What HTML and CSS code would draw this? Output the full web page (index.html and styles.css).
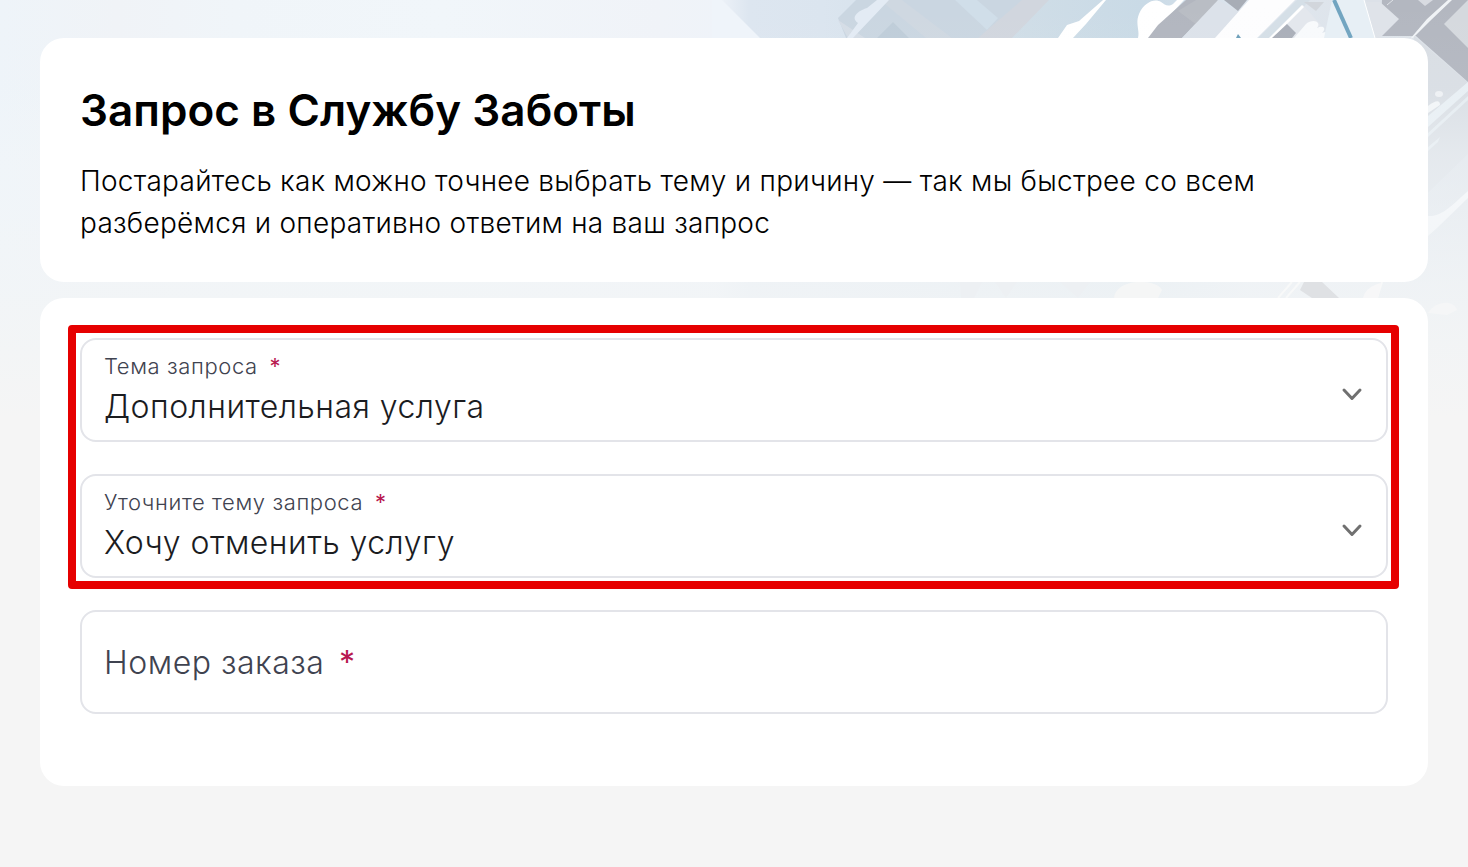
FILE: index.html
```
<!DOCTYPE html>
<html lang="ru">
<head>
    <meta charset="UTF-8">
    <meta name="viewport" content="width=device-width, initial-scale=1.0">
    <title>Запрос в Службу Заботы</title>
    <link rel="stylesheet" href="styles.css">
</head>
<body>
    <!-- Decorative background -->
    <svg class="backdrop" width="1468" height="440" viewBox="0 0 1468 440" aria-hidden="true">
        <defs>
            <linearGradient id="sky" x1="0" y1="0" x2="1" y2="0">
                <stop offset="0" stop-color="#eef4f9"/>
                <stop offset="0.08" stop-color="#f0f3f7"/>
                <stop offset="0.16" stop-color="#f0f5f9"/>
                <stop offset="0.3" stop-color="#f1f6fa"/>
                <stop offset="0.45" stop-color="#f0f3f8"/>
                <stop offset="0.488" stop-color="#eff3f9"/>
                <stop offset="0.51" stop-color="#dde6f0"/>
                <stop offset="0.56" stop-color="#dbe5ef"/>
                <stop offset="0.7" stop-color="#cfdde7"/>
                <stop offset="0.78" stop-color="#c9dae6"/>
                <stop offset="0.85" stop-color="#dfe6ee"/>
                <stop offset="1" stop-color="#dde2e8"/>
            </linearGradient>
            <linearGradient id="fade" x1="0" y1="0" x2="0" y2="1">
                <stop offset="0" stop-color="#f5f5f5" stop-opacity="0"/>
                <stop offset="0.2" stop-color="#f2f6f9" stop-opacity="0.05"/>
                <stop offset="0.35" stop-color="#f2f6f9" stop-opacity="0.45"/>
                <stop offset="0.64" stop-color="#f2f5f7" stop-opacity="0.85"/>
                <stop offset="0.78" stop-color="#f3f5f6" stop-opacity="0.95"/>
                <stop offset="0.95" stop-color="#f5f5f5"/>
            </linearGradient>
        </defs>
        <rect width="1468" height="440" fill="url(#sky)"/>
        <path d="M712 0h10l38 38h-48z" fill="#eff4fa"/>
        <path d="M856 0h192l-56 38H846l-8-20z" fill="#cad6e1"/>
        <path d="M838 20l27 18h-17z" fill="#d5dde6"/>
        <path d="M893 22l16 16h-32z" fill="#bfcdd9"/>
        <path d="M880 0h22l50 38h-26z" fill="#cfd8e1"/>
        <path d="M955 0h22l21 18-11 12z" fill="#d0dee9"/>
        <path d="M1022 0h27l-37 38h-34z" fill="#d1d6de"/>
        <path d="M877 0h12l-36 38h-6l11-15c-8-6 0-12 9-15z" fill="#e3ebf4"/>
        <path d="M1103 0h3l-20 24-13 14h-15l9-13 12-4z" fill="#fff"/>
        <path d="M1184 0l-35 38h-11c2-8-3-14 1-24 5-12 16-16 22-12 4 3 7 5 12 2l4-4z" fill="#fff"/>
        <path d="M1186 0h32l-36 38h-34l10-13z" fill="#b2b6bf"/>
        <path d="M1178 11l18-11h22l-17 28z" fill="#b9bdc4"/>
        <path d="M1218 0l27 15-23 23h-40z" fill="#dce2ea"/>
        <path d="M1224 0h23l-9 11z" fill="#a8adb6"/>
        <path d="M1249 0h46l-38 38h-42z" fill="#fdfdfe"/>
        <path d="M1297 0h13l-36 38h-16z" fill="#d5dfe7"/>
        <path d="M1303 5l18 20-13 13h-37z" fill="#e3e7ed"/>
        <path d="M1302 5l2 2-31 31h-4z" fill="#fff"/>
        <path d="M1287 24l9 9-4 5h-20z" fill="#aaafb9"/>
        <path d="M1304 2h20l-8 9z" fill="#d2d6dc"/>
        <path d="M1294 38l12-14c7-6 16-2 11 4 6-3 10 0 5 5 7-3 10 2 4 5z" fill="#f8fafc"/>
        <path d="M1332 0h32l11 38h-51z" fill="#e7eff5"/>
        <path d="M1365 0h23l-12 20-6-15z" fill="#dce1e8"/>
        <path d="M1382 0h86v82l-52-46h-36z" fill="#b3b7c0"/>
        <path d="M1366 2l14 0 19 17-19 19h-4z" fill="#dfe3e9"/>
        <path d="M1364 0l11 38" fill="none" stroke="#fff"/>
        <path d="M1393 0l-6 5" fill="none" stroke="#e0e3e8"/>
        <path d="M1418 0h15l-8 6z" fill="#d8dbe1"/>
        <path d="M1444 24l24-24v48z" fill="#d5d9de"/>
        <path d="M1448 0h4l-22 21-17 17-3 1 17-20z" fill="#f0f3f6"/>
        <path d="M1414 36l54 47v71l-54 52z" fill="#d9dee4"/>
        <path d="M1334 0l17 38" fill="none" stroke="#71a4c0" stroke-width="4"/>
        <path d="M1236 38l2-4 3 4z" fill="#6c9eb9"/>
        <path d="M1428 116l40-34v9l-40 36z" fill="#e8eff4"/>
        <path d="M1428 133l40-37v4l-40 37z M1428 147l12-10-2 5-10 9z" fill="#e5ecf1"/>
        <path d="M1428 106c8-6 12-6 12-1l-12 8z" fill="#f3f6f8"/>
        <ellipse cx="1439" cy="94" rx="4" ry="3" fill="#eef1f4"/>
        <path d="M1428 216c15 1 26-13 40-25v7l-31 30-9 8z" fill="#f8f9fb"/>
        <rect width="1468" height="440" fill="url(#fade)"/>
        <path d="M960 282h22l-8 16h-13z M995 282h22l-11 16z M1060 282h30l-12 16z" fill="#edf0f3"/>
        <path d="M1114 298c2-20 42-20 48-8l-4 8z" fill="#f5f6f6"/>
        <path d="M1304 282h18l17 16h-27l-12-8z" fill="#dfe1e4"/>
        <path d="M1300 282l-14 16 M1292 282l-14 16 M1382 282l-5 16" fill="none" stroke="#f8f9f9" stroke-width="2"/>
        <path d="M1363 298c2-9 10-13 18-15l-3 15z" fill="#f7f7f8"/>
        <path d="M1428 313c8-12 25-14 29-3l-10 5z" fill="#f5f6f7"/>
    </svg>

    <main class="page">
        <section class="card intro">
            <h1>Запрос в Службу Заботы</h1>
            <p>Постарайтесь как можно точнее выбрать тему и причину — так мы быстрее со всем разберёмся и оперативно ответим на ваш запрос</p>
        </section>

        <form class="card request">
            <div class="field">
                <div class="field-text">
                    <span class="label">Тема запроса <span class="required">*</span></span>
                    <span class="value">Дополнительная услуга</span>
                </div>
                <svg class="chevron" width="24" height="24" viewBox="0 0 24 24"><path d="M4 8l8 8.500 8-8.500"/></svg>
            </div>
            <div class="field">
                <div class="field-text">
                    <span class="label">Уточните тему запроса <span class="required">*</span></span>
                    <span class="value">Хочу отменить услугу</span>
                </div>
                <svg class="chevron" width="24" height="24" viewBox="0 0 24 24"><path d="M4 8l8 8.500 8-8.500"/></svg>
            </div>
            <div class="field">
                <span class="placeholder">Номер заказа <span class="required">*</span></span>
            </div>
            <div class="highlight"></div>
        </form>
    </main>
</body>
</html>
```
FILE: styles.css
```
/* Reset and general styling */
* {
    margin: 0;
    padding: 0;
    box-sizing: border-box;
}

body {
    background-color: #f5f5f5;
    color: #000;
    font-family: Inter, "Liberation Sans", sans-serif;
    min-height: 100vh;
    overflow: hidden;
}

.backdrop {
    position: absolute;
    top: 0;
    left: 0;
    z-index: -1;
}

.page {
    display: flex;
    flex-direction: column;
    gap: 16px;
    padding: 38px 40px;
}

.card {
    background: #fff;
    border-radius: 24px;
}

/* Heading card */
.intro {
    height: 244px;
    padding: 44px 40px 0;
}

.intro h1 {
    font-size: 44px;
    font-weight: 600;
    line-height: 56px;
    letter-spacing: 0.04px;
}

.intro p {
    max-width: 1240px;
    margin-top: 22px;
    font-size: 28px;
    font-weight: 300;
    line-height: 42px;
    letter-spacing: 0.26px;
}

/* Request form */
.request {
    position: relative;
    display: flex;
    flex-direction: column;
    gap: 32px;
    height: 488px;
    padding: 40px;
}

.field {
    display: flex;
    align-items: center;
    justify-content: space-between;
    height: 104px;
    padding: 0 22px;
    border: 2px solid #e3e4e9;
    border-radius: 16px;
}

.field-text {
    display: flex;
    flex-direction: column;
    padding-top: 2px;
}

.label {
    color: #3f4350;
    font-size: 22px;
    font-weight: 300;
    line-height: 32px;
    letter-spacing: 0.6px;
}

.value {
    color: #1b1c1f;
    font-size: 32px;
    font-weight: 300;
    line-height: 50px;
    letter-spacing: 0.47px;
}

.placeholder {
    color: #3f4350;
    font-size: 32px;
    font-weight: 300;
    letter-spacing: 0.52px;
}

.required {
    margin-left: 5px;
    color: #b8174f;
    font-weight: 400;
}

.chevron {
    margin-top: 7px;
    fill: none;
    stroke: #707070;
    stroke-width: 3;
    stroke-linecap: round;
    stroke-linejoin: round;
}

/* Red frame over the two selects */
.highlight {
    position: absolute;
    top: 27px;
    left: 28px;
    width: 1331px;
    height: 264px;
    border: 8px solid #e60000;
    border-radius: 4px;
}
```
